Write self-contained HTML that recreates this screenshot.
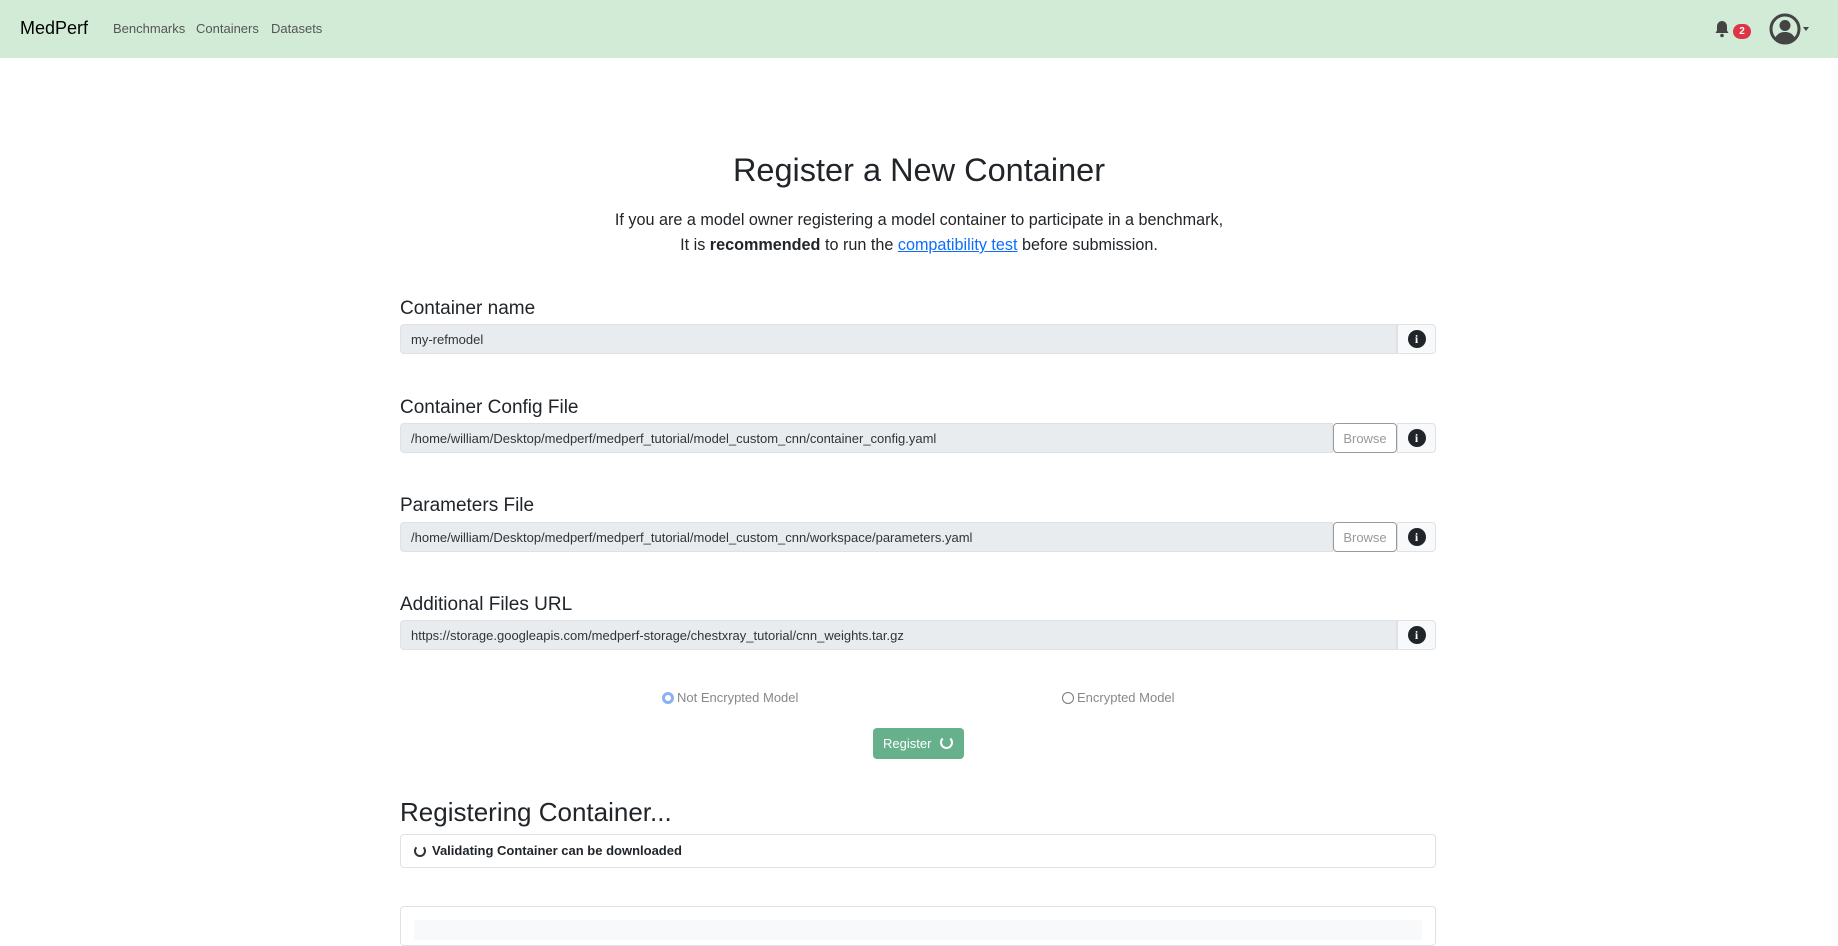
<!DOCTYPE html>
<html><head><meta charset="utf-8"><style>
*{box-sizing:border-box;margin:0;padding:0}
body{width:1838px;height:926px;overflow:hidden;background:#fff;font-family:"Liberation Sans",sans-serif;color:#212529;position:relative}
.nav{position:absolute;left:0;top:0;width:1838px;height:58px;background:#d1ebd6}
.abs{position:absolute}
.lbl{position:absolute;left:400px;font-size:19px;color:#212529}
.inp{position:absolute;left:400px;height:30px;background:#e9ecef;border:1px solid #dee2e6;border-radius:4px 0 0 4px;font-size:13px;color:#333;padding:7px 10px;white-space:nowrap}
.info{position:absolute;left:1397px;width:39px;height:30px;background:#f8f9fa;border:1px solid #dee2e6;border-radius:0 4px 4px 0;display:flex;align-items:center;justify-content:center}
.info span{width:18px;height:18px;border-radius:50%;background:#212529;color:#fff;font:bold 12px "Liberation Serif",serif;display:flex;align-items:center;justify-content:center}
.browse{position:absolute;left:1333px;width:64px;height:30px;background:#fff;border:1px solid #999;border-radius:4px;font-size:13px;color:#999;display:flex;align-items:center;justify-content:center}
</style></head><body>
<div class="nav">
<div class="abs" style="left:20px;top:18px;font-size:18px;color:#000">MedPerf</div>
<div class="abs" style="left:113px;top:21px;font-size:13px;color:#555">Benchmarks</div>
<div class="abs" style="left:196px;top:21px;font-size:13px;color:#555">Containers</div>
<div class="abs" style="left:271px;top:21px;font-size:13px;color:#555">Datasets</div>
<svg class="abs" style="left:1714px;top:20px" width="16" height="18" viewBox="0 0 16 18"><path d="M8 1c-3 0-5 2.5-5 5.5v4L1.5 13h13L13 10.5v-4C13 3.5 11 1 8 1z" fill="#444"/><circle cx="8" cy="15.5" r="1.8" fill="#444"/></svg>
<div class="abs" style="left:1733px;top:24px;width:18px;height:15px;border-radius:8px;background:#dc3545;color:#fff;font:bold 10px 'Liberation Sans';text-align:center;line-height:15px">2</div>
<svg class="abs" style="left:1769px;top:13px" width="32" height="32" viewBox="0 0 32 32"><circle cx="16" cy="16" r="14" fill="none" stroke="#444" stroke-width="3"/><circle cx="16" cy="12.5" r="5.5" fill="#444"/><path d="M6 25c3-5 6-6 10-6s7 1 10 6c-3 3-6 4.5-10 4.5S9 28 6 25z" fill="#444"/></svg>
<div class="abs" style="left:1803px;top:27px;border:3px solid transparent;border-top:4px solid #444"></div>
</div>
<div class="abs" style="left:0;width:1838px;top:152px;text-align:center;font-size:32.5px">Register a New Container</div>
<div class="abs" style="left:0;width:1838px;top:208px;text-align:center;font-size:16.2px;line-height:25px">If you are a model owner registering a model container to participate in a benchmark,<br>It is <b>recommended</b> to run the <a style="color:#0d6efd;text-decoration:underline">compatibility test</a> before submission.</div>

<div class="lbl" style="top:298px">Container name</div>
<div class="inp" style="top:324px;width:997px">my-refmodel</div>
<div class="info" style="top:324px"><span>i</span></div>

<div class="lbl" style="top:397px">Container Config File</div>
<div class="inp" style="top:423px;width:933px">/home/william/Desktop/medperf/medperf_tutorial/model_custom_cnn/container_config.yaml</div>
<div class="browse" style="top:423px">Browse</div>
<div class="info" style="top:423px"><span>i</span></div>

<div class="lbl" style="top:495px">Parameters File</div>
<div class="inp" style="top:522px;width:933px">/home/william/Desktop/medperf/medperf_tutorial/model_custom_cnn/workspace/parameters.yaml</div>
<div class="browse" style="top:522px">Browse</div>
<div class="info" style="top:522px"><span>i</span></div>

<div class="lbl" style="top:594px">Additional Files URL</div>
<div class="inp" style="top:620px;width:997px">https://storage.googleapis.com/medperf-storage/chestxray_tutorial/cnn_weights.tar.gz</div>
<div class="info" style="top:620px"><span>i</span></div>

<div class="abs" style="left:662px;top:692px;width:12px;height:12px;border-radius:50%;border:3px solid #8bb1f0;background:#fff"></div>
<div class="abs" style="left:677px;top:690px;font-size:13px;color:#888">Not Encrypted Model</div>
<div class="abs" style="left:1062px;top:692px;width:12px;height:12px;border-radius:50%;border:1px solid #777"></div>
<div class="abs" style="left:1077px;top:690px;font-size:13px;color:#888">Encrypted Model</div>

<div class="abs" style="left:873px;top:728px;width:91px;height:31px;background:#66b08c;border-radius:4px;color:#fff;font-size:13px;padding:8px 0 0 10px">Register</div>
<div class="abs" style="left:940px;top:736px;width:13px;height:13px;border-radius:50%;border:2px solid #fff;border-top-color:transparent"></div>

<div class="abs" style="left:400px;top:797px;font-size:26px">Registering Container...</div>
<div class="abs" style="left:400px;top:834px;width:1036px;height:34px;border:1px solid #dee2e6;border-radius:4px"></div>
<div class="abs" style="left:414px;top:845px;width:12px;height:12px;border-radius:50%;border:2px solid #333;border-top-color:transparent"></div>
<div class="abs" style="left:432px;top:843px;font-size:13px;font-weight:bold">Validating Container can be downloaded</div>
<div class="abs" style="left:400px;top:906px;width:1036px;height:40px;border:1px solid #dee2e6;border-radius:4px"></div>
<div class="abs" style="left:414px;top:920px;width:1008px;height:20px;background:#f8f9fa"></div>
</body></html>
